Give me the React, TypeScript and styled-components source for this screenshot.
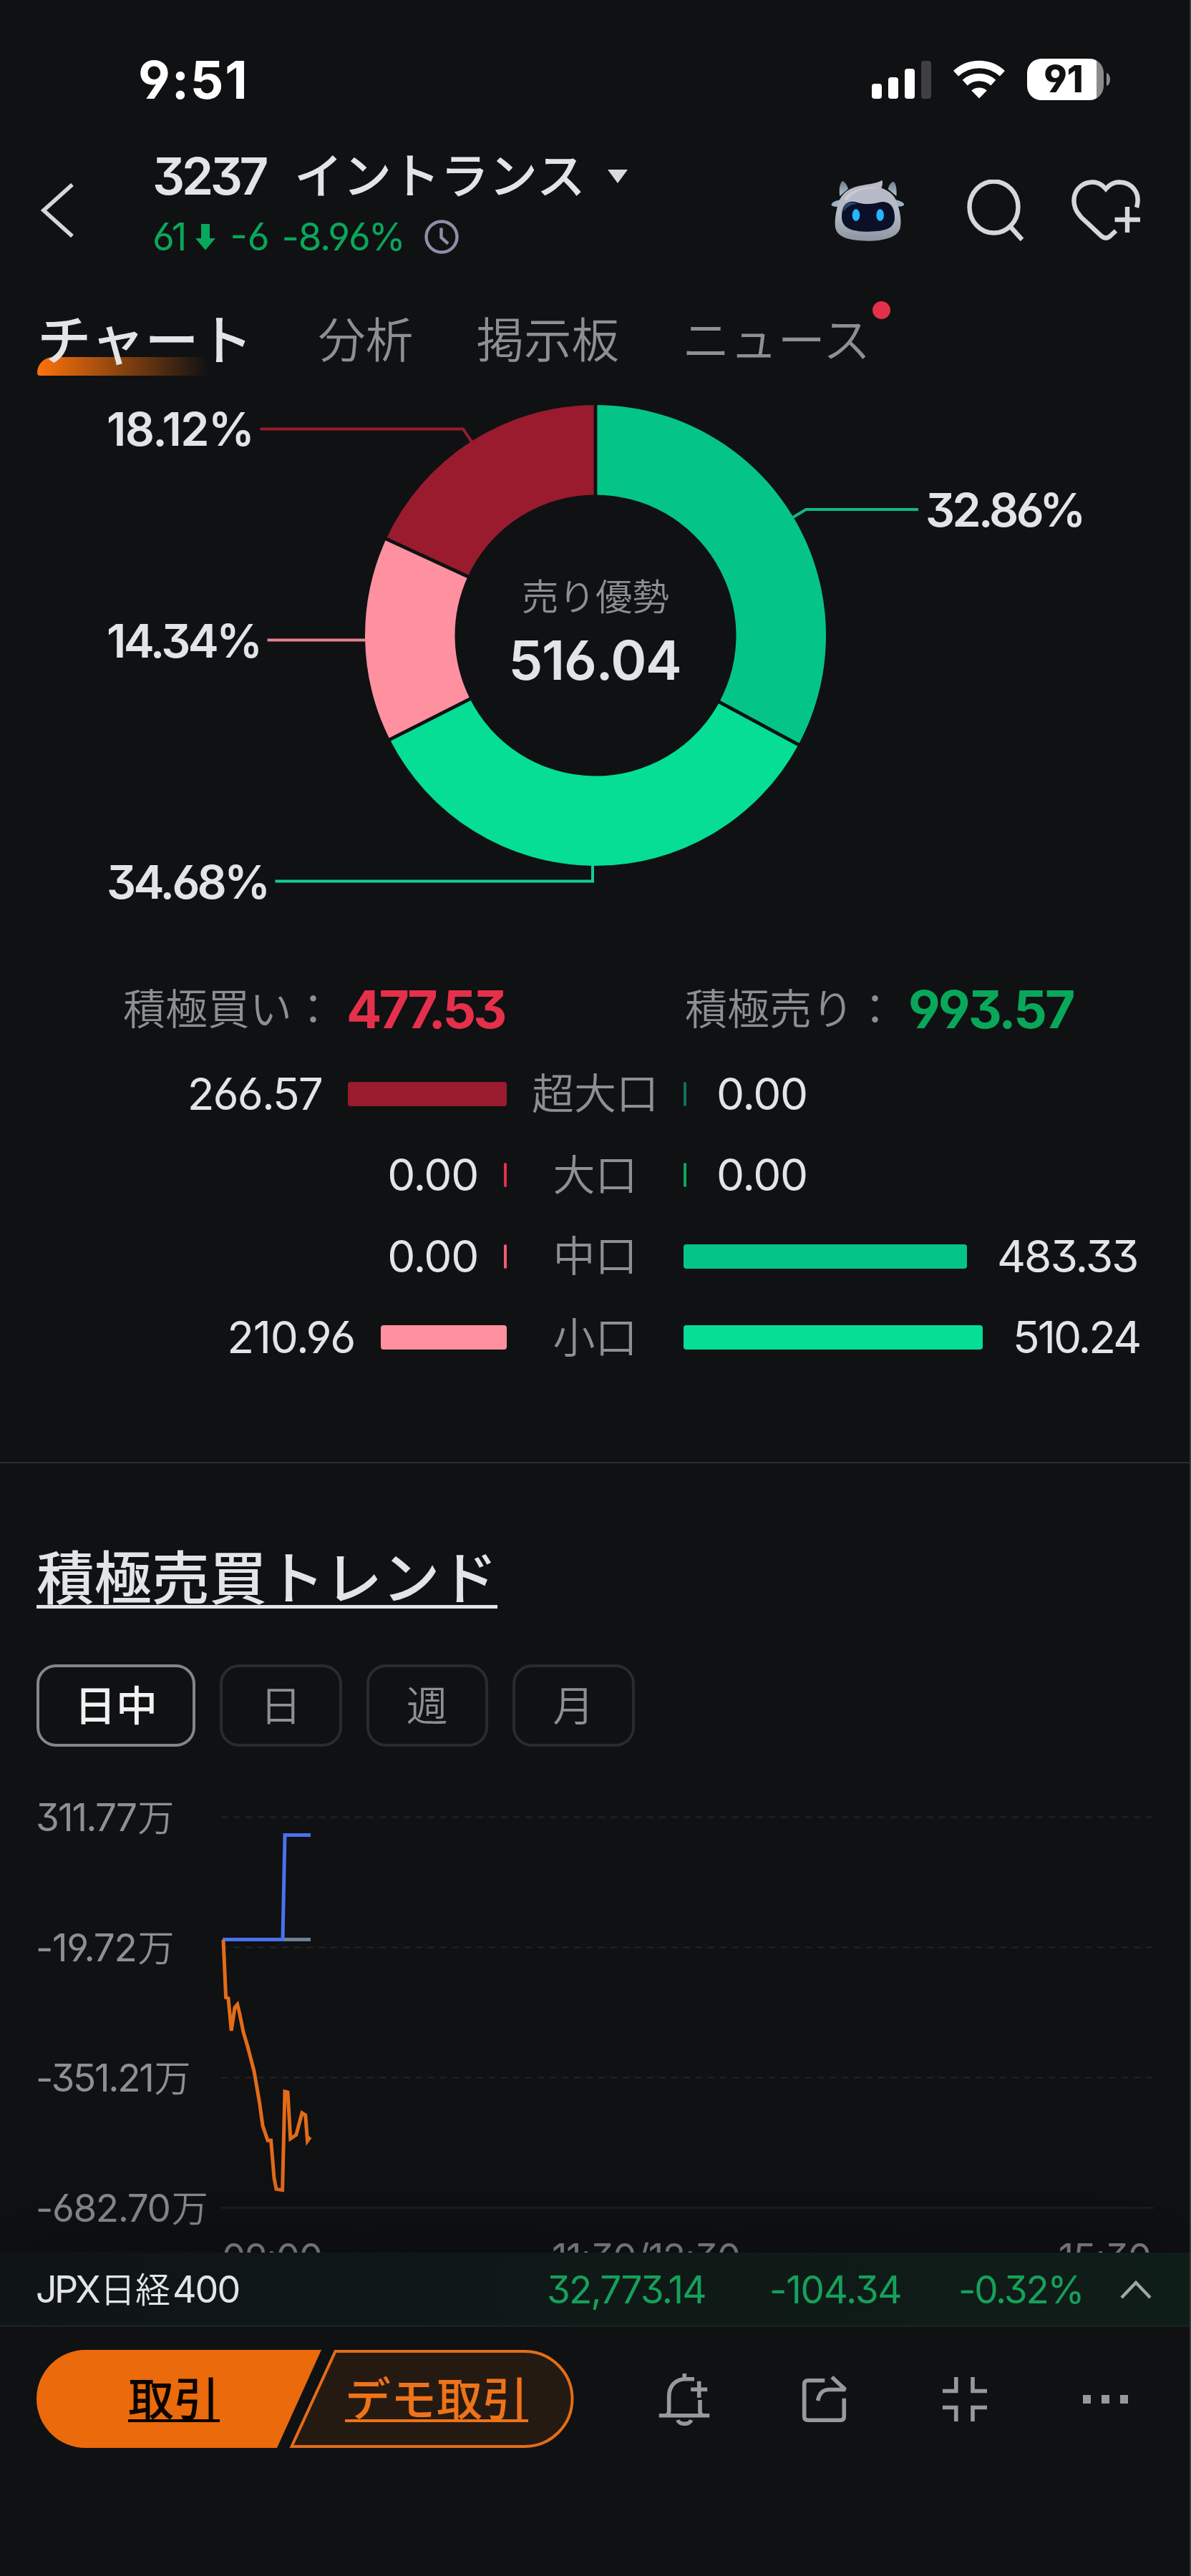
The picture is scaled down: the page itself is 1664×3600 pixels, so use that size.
import React from 'react';
import styled, { createGlobalStyle } from 'styled-components';

const C = {
  bg: '#0f1113',
  text: '#e3e4e6',
  sub: '#8e8f92',
  green: '#09a75a',
  red: '#e5304b',
  orange: '#ea6a0c',
  seg1: '#05c586',
  seg2: '#05de94',
  pink: '#ff90a0',
  wine: '#991b2d',
};
const FONT = '"Inter", "Noto Sans CJK JP", sans-serif';
const DIGITS = '"cv03", "cv04", "cv09"';

const Global = createGlobalStyle`
  html, body { margin: 0; padding: 0; background: ${C.bg}; }
  * { box-sizing: border-box; }
  svg { display: block; flex: none; }
`;

const Screen = styled.main`
  width: 1664px;
  height: 3600px;
  overflow: hidden;
  display: flex;
  flex-direction: column;
  background: ${C.bg};
  color: ${C.text};
  border-right: 2px solid #38393b;
  font-family: ${FONT};
  font-feature-settings: ${DIGITS};
  line-height: 1;
  white-space: nowrap;
`;

const Num = styled.span<{ $size: number; $ls?: number; $weight?: number; $color?: string }>`
  font-size: ${p => p.$size}px;
  letter-spacing: ${p => p.$ls ?? 0}px;
  font-weight: ${p => p.$weight ?? 400};
  color: ${p => p.$color ?? C.text};
  line-height: 1;
`;

const Gap = styled.i<{ $w: number }>`
  width: ${p => p.$w}px;
  flex: none;
`;

/* ---------- status bar ---------- */
const StatusBar = styled.div`
  height: 204px;
  flex: none;
  padding: 18px 111px 0 193px;
  display: flex;
  align-items: center;
  justify-content: space-between;
`;
const StatusIcons = styled.div`
  display: flex;
  align-items: center;
`;
const Signal = styled.div`
  display: flex;
  align-items: flex-end;
  gap: 8.5px;
  margin-right: 31px;
`;
const SignalBar = styled.i<{ $h: number; $dim?: boolean }>`
  width: 14.4px;
  height: ${p => p.$h}px;
  border-radius: 4px;
  background: ${p => (p.$dim ? '#404042' : '#fff')};
`;
const Battery = styled.div`
  width: 107px;
  height: 58px;
  margin-left: 31px;
  border-radius: 20px;
  background: linear-gradient(90deg, #fff 0 97px, #8b8b8b 97px);
  color: ${C.bg};
  display: flex;
  align-items: center;
  justify-content: center;
  font-size: 52px;
  font-weight: 800;
  padding-right: 5px;
`;
const BatteryNub = styled.i`
  width: 5px;
  height: 18px;
  margin-left: 4px;
  border-radius: 0 5px 5px 0 / 0 9px 9px 0;
  background: #8b8b8b;
`;

/* ---------- header ---------- */
const Header = styled.header`
  height: 180px;
  flex: none;
  padding: 0 69px 0 57px;
  display: flex;
  align-items: center;
`;
const TitleBlock = styled.div`
  align-self: flex-start;
  margin: 6px auto 0 110px;
`;
const TitleRow = styled.div`
  height: 72px;
  display: flex;
  align-items: center;
`;
const StockName = styled.h1`
  margin: 0 31px 0 40px;
  font-size: 68px;
  line-height: 1;
  font-weight: 500;
`;
const QuoteRow = styled.div`
  height: 60px;
  margin-top: 19px;
  display: flex;
  align-items: center;
`;
const HeaderIcons = styled.div`
  display: flex;
  align-items: center;
`;

/* ---------- tabs ---------- */
const Tabs = styled.nav`
  height: 156px;
  flex: none;
  padding: 28px 0 0 52px;
  display: flex;
  align-items: center;
  gap: 88px;
`;
const Tab = styled.span<{ $active?: boolean }>`
  position: relative;
  isolation: isolate;
  font-size: ${p => (p.$active ? 75.5 : 66.6)}px;
  font-weight: ${p => (p.$active ? 500 : 350)};
  color: ${p => (p.$active ? C.text : C.sub)};
  margin-right: ${p => (p.$active ? 3 : 0)}px;
`;
const TabUnderline = styled.i`
  position: absolute;
  z-index: -1;
  left: 0;
  bottom: -11px;
  width: 240px;
  height: 26px;
  border-radius: 22px 0 0 4px;
  background: linear-gradient(90deg, #fd720c, rgba(253, 114, 12, 0));
`;
const RedDot = styled.i`
  position: absolute;
  right: -28px;
  top: -22px;
  width: 25px;
  height: 25px;
  border-radius: 50%;
  background: ${C.red};
`;

/* ---------- order table ---------- */
const Summary = styled.div`
  height: 132px;
  flex: none;
  padding: 8px 0 0 172px;
  display: grid;
  grid-template-columns: 785px 1fr;
  align-items: center;
`;
const SummaryItem = styled.div`
  display: flex;
  align-items: center;
  gap: 17px;
`;
const Label = styled.span`
  font-size: 59px;
  font-weight: 350;
  color: ${C.sub};
`;
const FlowRow = styled.div`
  height: 113.5px;
  flex: none;
  display: grid;
  grid-template-columns: 708px 247px 1fr;
  align-items: center;
`;
const Side = styled.div<{ $left?: boolean }>`
  display: flex;
  align-items: center;
  justify-content: ${p => (p.$left ? 'flex-end' : 'flex-start')};
  gap: ${p => (p.$left ? 36 : 42)}px;
`;
const Bar = styled.i<{ $w: number; $c: string }>`
  width: ${p => p.$w}px;
  height: 34px;
  border-radius: ${p => (p.$w > 10 ? 4 : 2)}px;
  background: ${p => p.$c};
`;
const RowLabel = styled(Label)`
  text-align: center;
`;
const Divider = styled.hr`
  width: 100%;
  flex: none;
  height: 2px;
  border: 0;
  margin: 117px 0 0;
  background: #2b2d2f;
`;

/* ---------- trend ---------- */
const Heading = styled.h2`
  margin: 121px 0 0 51px;
  font-size: 80.5px;
  height: 80px;
  line-height: 80px;
  font-weight: 500;
  text-decoration: underline;
  text-decoration-thickness: 5px;
  text-underline-offset: 8px;
  text-decoration-skip-ink: none;
  align-self: flex-start;
`;
const Chips = styled.div`
  display: flex;
  gap: 34px;
  margin: 80px 0 0 51px;
`;
const Chip = styled.button<{ $active?: boolean }>`
  width: ${p => (p.$active ? 222 : 170.5)}px;
  height: 115px;
  padding: 0;
  border: 4px solid ${p => (p.$active ? '#858688' : '#2a2b31')};
  border-radius: 27px;
  background: none;
  color: ${p => (p.$active ? '#f1f1f2' : C.sub)};
  font: ${p => (p.$active ? 500 : 350)} 58px/1 ${FONT};
`;

/* ---------- bottom ---------- */
const Ticker = styled.div`
  position: relative;
  height: 104px;
  flex: none;
  padding: 3px 53px 0 50px;
  display: grid;
  grid-template-columns: 714px 311px 264px 1fr auto;
  align-items: center;
  background: linear-gradient(90deg, #0f1515, #0f1d18);
  border-bottom: 3px solid #17211e;
  box-shadow: 0 0 150px 10px rgba(0, 0, 0, 0.35);
`;
const TickerName = styled.div`
  display: flex;
  align-items: center;
  font-size: 49px;
  font-weight: 350;
  gap: 3px;
`;
const Toolbar = styled.footer`
  position: relative;
  flex: 1;
  background: ${C.bg};
  padding: 32px 85px 0 51px;
  display: flex;
  align-items: flex-start;
`;
const TradeGroup = styled.div`
  position: relative;
  width: 751px;
  height: 137px;
  display: grid;
  grid-template-columns: 384px 350px;
  place-items: center;
`;
const TradeShape = styled.svg`
  position: absolute;
  inset: 0;
`;
const TradeLink = styled.a<{ $c: string }>`
  position: relative;
  font-size: 64px;
  font-weight: 500;
  color: ${p => p.$c};
  text-decoration: underline;
  text-decoration-thickness: 4px;
  text-underline-offset: 5px;
  text-decoration-skip-ink: none;
`;
const Tools = styled.div`
  height: 137px;
  margin-left: 118px;
  display: flex;
  align-items: center;
`;

/* ---------- icons ---------- */
const Wifi = () => (
  <svg width="72" height="54" viewBox="0 0 72 54" fill="none" stroke="#fff">
    <path d="M3.6 18.8a47.5 47.5 0 0 1 64.8 0" strokeWidth="10.4" />
    <path d="M16.2 31.6a29.5 29.5 0 0 1 39.6 0" strokeWidth="10.4" />
    <path d="M36 53.5 25.2 42.6a16 16 0 0 1 21.6 0z" fill="#fff" stroke="none" />
  </svg>
);
const Back = () => (
  <svg width="46" height="76" viewBox="0 0 46 76" fill="none" stroke="#d6d7d9" strokeWidth="5.6">
    <path d="M44 2 4 38l40 36" />
  </svg>
);
const Clock = () => (
  <svg width="48" height="48" viewBox="0 0 48 48" fill="none" stroke="#8b90a6" strokeWidth="4.4">
    <circle cx="24" cy="24" r="21.5" />
    <path d="M23.500 11.500V25l9.500 8.500" />
  </svg>
);
const DownArrow = () => (
  <svg width="28" height="38" viewBox="0 0 28 38" fill={C.green}>
    <path d="M8 1h12v20h8L14 37.500 0 21h8z" />
  </svg>
);
const Robot = () => (
  <svg width="103" height="87" viewBox="34 63 309 261">
    <defs>
      <linearGradient id="shell" x1="0" y1="0" x2="0" y2="1">
        <stop offset="0" stopColor="#b9bac6" />
        <stop offset=".55" stopColor="#b3bac6" />
        <stop offset="1" stopColor="#8c95a1" />
      </linearGradient>
      <linearGradient id="horn" x1="0" y1="0" x2="0" y2="1">
        <stop offset="0" stopColor="#6d7c8d" />
        <stop offset="1" stopColor="#b4bfcc" />
      </linearGradient>
    </defs>
    <path d="M71 132C66 104 72 76 82 69c10 2 19 16 24 33zM308 132c3-28-2-54-12-61-10 3-19 16-23 32z" fill="url(#horn)" />
    <path d="M74 147c-15 4-32 7-39 21 5 9 18 10 28 8zM303 147c14 5 32 6 38 20-5 9-18 10-27 8z" fill="#9fb0c1" />
    <path d="M66 158C78 120 112 98 150 90c40-9 77-10 98-25 4 9 2 23-3 33 32 12 57 30 66 62 11 32 19 68 14 100-5 44-68 60-139 60S58 306 52 262c-4-34 4-70 14-104z" fill="url(#shell)" />
    <path d="M90 147c20-50 110-58 150-48-20-1-100 0-124 36-10 12-20 18-26 12z" fill="#c9cad5" />
    <path d="M79 218c0-35 12-57 36-62 24-4 38 11 76 9 38 1 48-14 74-7 26 7 35 30 36 62 1 48-38 61-111 61-74 0-111-17-111-63z" fill="#0b1028" />
    <path d="M84 200c3-25 14-40 36-42 10 0 16 4 24 7-26 0-46 14-60 35z" fill="#294b77" />
    <ellipse cx="139" cy="212" rx="16" ry="25" fill="#25b4ff" />
    <ellipse cx="240" cy="212" rx="16" ry="25" fill="#25b4ff" />
  </svg>
);
const Search = () => (
  <svg width="80" height="86" viewBox="0 0 80 86" fill="none" stroke="#d6d7d9" strokeWidth="6.400">
    <ellipse cx="37.500" cy="38.500" rx="34" ry="36" />
    <path d="m59 64 18 20" />
  </svg>
);
const HeartPlus = () => (
  <svg width="96" height="86" viewBox="0 0 96 86" fill="none" stroke="#d6d7d9" strokeWidth="6.400">
    <path d="M91 39c6-20-6-35-24-35.500-8 0-14 3.500-19 9.500-5-6-11-9.500-19-9.500C12 4 1 18 4 35c1.500 8 5 12 10 18l28 26c4 3.500 8 3.500 12 0l8-7.500" />
    <path d="M78 38v36M60.500 56h35.500" />
  </svg>
);
const tool = { fill: 'none', stroke: '#98999c', strokeWidth: 5.6 };
const BellPlus = () => (
  <svg width="72" height="80" viewBox="0 0 72 80" {...tool}>
    <path d="M36.300 4v8M50 11.700H38C24 11.700 14.700 21 14.700 36v21q0 3-3 5.500M.7 62.700h70.600M58 41v16q0 3 3 5.500" />
    <path d="M56.700 14.800v23M45.200 26.300h23" />
    <path d="M27 69c2 7 16.600 7 18.600 0" />
  </svg>
);
const Share = () => (
  <svg width="64" height="80" viewBox="0 0 64 80" {...tool}>
    <path d="M32.300 13.700H9q-5.300 0-5.300 5.300v45q0 5.300 5.300 5.300h45q5.300 0 5.300-5.300V38.700" />
    <path d="M42.300 9 61 26.500H39C29 26.500 25 32 22.500 42" strokeLinejoin="bevel" />
  </svg>
);
const Collapse = () => (
  <svg width="62" height="62" viewBox="0 0 62 62" {...tool}>
    <path d="M0 19.500h18.800V0M62 19.500H42V0M0 42.500h18.800V62M62 42.500H42V62" />
  </svg>
);
const More = () => (
  <svg width="64" height="12" viewBox="0 0 64 12" fill="#98999c">
    <path d="M0 0h11v12H0zM26 0h11v12H26zM52 0h11v12H52z" />
  </svg>
);

/* ---------- charts ---------- */
const CX = 832;
const CY = 888;
const RO = 322;
const RI = 196.5;
const point = (r: number, t: number) =>
  `${CX + r * Math.sin(t * 2 * Math.PI)} ${CY - r * Math.cos(t * 2 * Math.PI)}`;
const slice = (a: number, b: number) =>
  `M${point(RO, a)}A${RO} ${RO} 0 0 1 ${point(RO, b)}L${point(RI, b)}A${RI} ${RI} 0 0 0 ${point(RI, a)}Z`;
const slices = [
  { a: 0, b: 0.3286, c: C.seg1 },
  { a: 0.3286, b: 0.6754, c: C.seg2 },
  { a: 0.6754, b: 0.8188, c: C.pink },
  { a: 0.8188, b: 1, c: C.wine },
];

const Donut = () => (
  <svg width="1662" height="800" viewBox="0 540 1662 800" fontFamily={FONT}>
    {slices.map(s => (
      <path key={s.c} d={slice(s.a, s.b)} fill={s.c} />
    ))}
    {slices.map(s => (
      <path key={s.c} d={`M${point(RI - 2, s.a)}L${point(RO + 2, s.a)}`} stroke={C.bg} strokeWidth="4.800" />
    ))}
    <g fill="none" strokeWidth="4">
      <path d="M363.500 599.500H647l12 18" stroke={C.wine} />
      <path d="M373.500 894.500H511" stroke="#e8808f" />
      <path d="M384.500 1231.500H828V1209" stroke="#12cf8f" />
      <path d="M1283 712h-157l-19 11.500" stroke="#10b881" />
    </g>
    <g fill={C.text} fontSize="64.500" fontWeight="600">
      <text x="149" y="623" letterSpacing="-1.500">18.12%</text>
      <text x="149" y="918.500" letterSpacing="-3.600">14.34%</text>
      <text x="149" y="1255.500" letterSpacing="-3.700">34.68%</text>
      <text x="1293" y="736" letterSpacing="-3.700">32.86%</text>
    </g>
    <text x="832" y="852.500" textAnchor="middle" fill={C.sub} fontSize="51.500" fontWeight="350">売り優勢</text>
    <text x="831" y="950" textAnchor="middle" fill={C.text} fontSize="76" fontWeight="600" letterSpacing="-1.300">516.04</text>
  </svg>
);

const grid = [
  { y: 2539.5, n: '311.77', ls: -1.9 },
  { y: 2721.5, n: '-19.72', ls: -1.3 },
  { y: 2903.5, n: '-351.21', ls: -2.3 },
  { y: 3085.5, n: '-682.70', ls: -1.4 },
];
const largeOrders =
  '312,2711 315.6,2791.4 319,2792.7 323.2,2838 328,2805.7 331.7,2801.4 334.8,2814 340,2840 346,2860 355,2894.6 362.5,2938 367,2970.5 374,2991.3 378.6,2991.3 383,3044 386,3059.4 394.6,3060.7 398,2923 402,2924 405.8,2989 413.8,2983.5 422,2953 426.8,2956 429.5,2992 433.5,2986.6';

const Trend = () => (
  <svg width="1662" height="707" viewBox="0 2441 1662 707" fontFamily={FONT}>
    {grid.map((g, i) => (
      <g key={g.n}>
        <text x="50" y={g.y + 19.5} fill={C.sub} fontSize="53" letterSpacing={g.ls}>
          {g.n}
          <tspan fontSize="51" fontWeight="350" dx="2">万</tspan>
        </text>
        <path d={`M309 ${g.y}H1612`} stroke="#1f2022" strokeWidth="2.600" strokeDasharray={i < 3 ? '9 8' : undefined} />
      </g>
    ))}
    <g fill="none" strokeWidth="5">
      <path d="M311 2710.500H434" stroke="#6e8093" />
      <path d="M311 2710.500H395L398 2564.500H434" stroke="#4a72ee" />
      <polyline points={largeOrders} stroke="#e46c17" />
    </g>
    <g fill="#858689" fontSize="53">
      <text x="310" y="3174" letterSpacing="-1.300">09:00</text>
      <text x="771" y="3174" letterSpacing="-1.500">11:30/12:30</text>
      <text x="1608" y="3174" textAnchor="end" letterSpacing="-1.200">15:30</text>
    </g>
  </svg>
);

const rows = [
  { label: '超大口', l: '266.57', lls: -1.9, lw: 222, lc: C.wine, r: '0.00', rls: -1.3, rw: 4, rc: '#14705a' },
  { label: '大口', l: '0.00', lls: -1.3, lw: 4, lc: C.red, r: '0.00', rls: -1.3, rw: 4, rc: C.green },
  { label: '中口', l: '0.00', lls: -1.3, lw: 4, lc: '#f7596f', r: '483.33', rls: -2, rw: 396, rc: C.seg1 },
  { label: '小口', l: '210.96', lls: -1.3, lw: 176, lc: C.pink, r: '510.24', rls: -3, rw: 418, rc: C.seg2 },
];

export default function App() {
  return (
    <Screen>
      <Global />
      <StatusBar>
        <Num $size={73} $weight={700} $ls={1.8} $color="#fff">9:51</Num>
        <StatusIcons>
          <Signal>
            <SignalBar $h={21} />
            <SignalBar $h={30} />
            <SignalBar $h={42} />
            <SignalBar $h={53} $dim />
          </Signal>
          <Wifi />
          <Battery>91</Battery>
          <BatteryNub />
        </StatusIcons>
      </StatusBar>

      <Header>
        <Back />
        <TitleBlock>
          <TitleRow>
            <Num $size={71} $weight={600} $ls={-4.4}>3237</Num>
            <StockName>イントランス</StockName>
            <svg width="28" height="19" viewBox="0 0 28 19" fill="#d9dadc"><path d="M0 0h28L14 19z" /></svg>
          </TitleRow>
          <QuoteRow>
            <Num $size={53} $ls={-4} $color={C.green}>61</Num>
            <Gap $w={16} />
            <DownArrow />
            <Gap $w={20} />
            <Num $size={53} $ls={0} $color={C.green}>-6</Num>
            <Gap $w={17} />
            <Num $size={53} $ls={-1.3} $color={C.green}>-8.96%</Num>
            <Gap $w={28} />
            <Clock />
          </QuoteRow>
        </TitleBlock>
        <HeaderIcons>
          <Robot />
          <Gap $w={87} />
          <Search />
          <Gap $w={66} />
          <HeartPlus />
        </HeaderIcons>
      </Header>

      <Tabs>
        <Tab $active>チャート<TabUnderline /></Tab>
        <Tab>分析</Tab>
        <Tab>掲示板</Tab>
        <Tab>ニュース<RedDot /></Tab>
      </Tabs>

      <Donut />

      <Summary>
        <SummaryItem>
          <Label>積極買い：</Label>
          <Num $size={73} $weight={700} $ls={-4} $color={C.red}>477.53</Num>
        </SummaryItem>
        <SummaryItem>
          <Label>積極売り：</Label>
          <Num $size={73} $weight={700} $ls={-3} $color={C.green}>993.57</Num>
        </SummaryItem>
      </Summary>
      {rows.map(r => (
        <FlowRow key={r.label}>
          <Side $left>
            <Num $size={62} $ls={r.lls}>{r.l}</Num>
            <Bar $w={r.lw} $c={r.lc} />
          </Side>
          <RowLabel>{r.label}</RowLabel>
          <Side>
            <Bar $w={r.rw} $c={r.rc} />
            <Num $size={62} $ls={r.rls}>{r.r}</Num>
          </Side>
        </FlowRow>
      ))}
      <Divider />

      <Heading>積極売買トレンド</Heading>
      <Chips>
        <Chip $active>日中</Chip>
        <Chip>日</Chip>
        <Chip>週</Chip>
        <Chip>月</Chip>
      </Chips>
      <Trend />

      <Ticker>
        <TickerName>
          <Num $size={52} $ls={-3.8}>JPX</Num>
          日経
          <Num $size={52} $ls={-2}>400</Num>
        </TickerName>
        <Num $size={53} $ls={-1.8} $color="#16a05b">32,773.14</Num>
        <Num $size={53} $ls={-1.2} $color="#16a05b">-104.34</Num>
        <Num $size={53} $ls={-2.2} $color="#16a05b">-0.32%</Num>
        <svg width="44" height="26" viewBox="0 0 44 26" fill="none" stroke="#a2a5a4" strokeWidth="4.400">
          <path d="M2 24 22 3l20 21" />
        </svg>
      </Ticker>

      <Toolbar>
        <TradeGroup>
          <TradeShape width="751" height="137" viewBox="0 0 751 137">
            <path d="M68.500 0H398L336 137H68.500a68.500 68.500 0 0 1 0-137z" fill={C.orange} />
            <path d="M417.500 2H682a66.500 66.500 0 0 1 0 133H356.500z" fill="#251a12" stroke="#e46c17" strokeWidth="4" />
          </TradeShape>
          <TradeLink $c="#0b0500">取引</TradeLink>
          <TradeLink $c="#ee7319">デモ取引</TradeLink>
        </TradeGroup>
        <Tools>
          <BellPlus />
          <Gap $w={128} />
          <Share />
          <Gap $w={133} />
          <Collapse />
          <Gap $w={134} />
          <More />
        </Tools>
      </Toolbar>
    </Screen>
  );
}
